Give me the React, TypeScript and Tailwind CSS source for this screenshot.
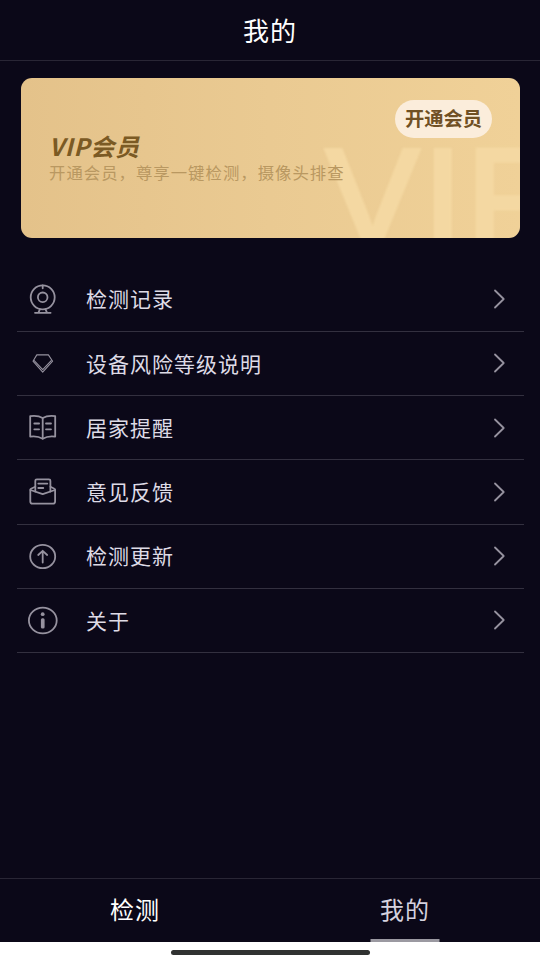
import type { ReactNode } from 'react';

const menuItems: { label: string; icon: ReactNode }[] = [
  {
    label: '检测记录',
    icon: (
      <>
        <circle cx="15.7" cy="13.3" r="12" />
        <circle cx="15.7" cy="13.3" r="4.8" />
        <path d="M15.7 1.5v2.8M13 25.2l-1.6 3.4M18.4 25.2l1.6 3.4M8 28.8h15.6" />
      </>
    ),
  },
  {
    label: '设备风险等级说明',
    icon: (
      <g strokeWidth="1.1">
        <path d="M9.8 6.9h11.6l4.2 6.3-9.9 10.9L6 13.2z" />
        <path d="M7.2 12.6l8.5 9.1 8.5-9.1" />
      </g>
    ),
  },
  {
    label: '居家提醒',
    icon: (
      <>
        <path d="M3.2 4.2c4.5-.6 9-.2 12.5 1.8 3.5-2 8-2.4 12.5-1.8v20.4c-4.5-.6-9 0-12.5 2.2-3.5-2.2-8-2.8-12.5-2.2z" />
        <path d="M15.7 6v20.5M7.3 11.5h4.8M7.3 17.3h4.8M19 11.5h5M19 17.3h5" />
      </>
    ),
  },
  {
    label: '意见反馈',
    icon: (
      <>
        <path d="M8.3 10.7l-4.3 2a1.2 1.2 0 0 0-.7 1.1v11.7a2.2 2.2 0 0 0 2.2 2.2h20.4a2.2 2.2 0 0 0 2.2-2.2V13.8a1.2 1.2 0 0 0-.7-1.1l-3.9-2" />
        <path d="M3.5 14l12.2 4.2L27.9 14" />
        <path d="M8.3 15.5V4.8a1.5 1.5 0 0 1 1.5-1.5h12.1a1.5 1.5 0 0 1 1.5 1.5v10.7M11.3 7.6h9M11.3 12h5" />
      </>
    ),
  },
  {
    label: '检测更新',
    icon: (
      <>
        <ellipse cx="15.7" cy="15.5" rx="12.5" ry="11.7" />
        <path d="M15.7 21.5V10M11.2 14l4.5-4.2 4.5 4.2" />
      </>
    ),
  },
  {
    label: '关于',
    icon: (
      <>
        <ellipse cx="15.8" cy="15.5" rx="13.9" ry="12.8" />
        <circle cx="15.7" cy="9.2" r="1.9" fill="currentColor" stroke="none" />
        <rect x="13.9" y="13.3" width="3.7" height="10.3" rx="1.5" fill="currentColor" stroke="none" />
      </>
    ),
  },
];

function VipCard() {
  return (
    <div className="relative mx-[20.5px] mt-[17px] h-40 shrink-0 overflow-hidden rounded-[11px] bg-gradient-to-r from-[#e4c28a] via-[#eaca92] to-[#f0d198]">
      <span className="absolute left-[306px] top-[60px] font-['Liberation_Sans'] text-[138px] leading-[118px] tracking-[5px] text-[#f4d8a2] blur-[1px] [-webkit-text-stroke:5px_#f4d8a2]">
        VIP
      </span>
      <div className="relative flex h-full flex-col pl-[28.5px] pr-[27.5px]">
        <button className="mt-[22px] h-[38px] w-[97px] self-end whitespace-nowrap rounded-full bg-[#fbeddb] text-[19.3px] font-bold leading-none text-[#705024]">
          开通会员
        </button>
        <h2 className="-mt-[5px] text-2xl font-bold italic leading-[26px] tracking-[0.8px] text-[#7b5a24]">VIP会员</h2>
        <p className="mt-px text-[16.4px] leading-6 tracking-[1px] text-[#b99861]">
          开通会员，尊享一键检测，摄像头排查
        </p>
      </div>
    </div>
  );
}

function App() {
  return (
    <div className="flex h-[960px] w-[540px] flex-col overflow-hidden bg-[#0b0818] font-['Noto_Sans_CJK_SC',sans-serif]">
      <header className="flex h-[61px] shrink-0 items-center justify-center border-b border-[#292635] pb-px text-[26px] tracking-[1px] text-white">
        我的
      </header>
      <VipCard />
      <ul className="ml-[17px] mr-4 mt-[29.5px]">
        {menuItems.map((item) => (
          <li key={item.label} className="flex h-[64.25px] items-center border-b border-[#33303f] pl-2.5 pr-[17px]">
            <svg
              className="mt-px size-8 text-[#96929f]"
              viewBox="0 0 32 32"
              fill="none"
              stroke="currentColor"
              strokeWidth="1.8"
              strokeLinecap="round"
              strokeLinejoin="round"
            >
              {item.icon}
            </svg>
            <span className="ml-[27px] flex-1 text-[21px] tracking-[1px] text-[#dedbe6]">{item.label}</span>
            <svg
              className="h-5 w-3.5 text-[#96929f]"
              viewBox="0 0 14 20"
              fill="none"
              stroke="currentColor"
              strokeWidth="1.8"
              strokeLinecap="round"
              strokeLinejoin="round"
            >
              <path d="M2 1.5l8.7 8.5L2 18.5" />
            </svg>
          </li>
        ))}
      </ul>
      <nav className="mt-auto grid h-16 shrink-0 grid-cols-2 border-t border-[#292635] text-2xl tracking-[1px]">
        <button className="pb-[3px] text-white">检测</button>
        <button className="relative pb-[3px] text-[#d5d2df]">
          我的
          <span className="absolute bottom-0 left-1/2 h-[3px] w-[69px] -translate-x-1/2 bg-[#9b99a1]" />
        </button>
      </nav>
      <div className="flex h-[18px] shrink-0 justify-center bg-white pt-2">
        <div className="h-[5px] w-[199px] rounded-full bg-[#303231]" />
      </div>
    </div>
  );
}

export default App;
